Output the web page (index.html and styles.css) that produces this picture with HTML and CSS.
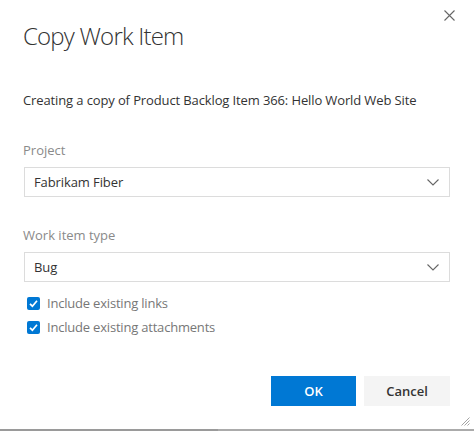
FILE: index.html
```html
<!DOCTYPE html>
<html>
<head>
<meta charset="utf-8">
<link rel="stylesheet" href="styles.css">
</head>
<body>
<div class="dialog">
  <div class="header">
    <h1 class="title">Copy Work Item</h1>
    <button class="close" aria-label="Close">
      <svg width="11" height="11" viewBox="0 0 11 11"><path d="M0.5 0.5 L10.5 10.5 M10.5 0.5 L0.5 10.5" stroke="#666" stroke-width="1.1" fill="none"/></svg>
    </button>
  </div>
  <p class="desc">Creating a copy of Product Backlog Item 366: Hello World Web Site</p>

  <div class="field field-project">
    <div class="label">Project</div>
    <div class="select">
      <span class="value">Fabrikam Fiber</span>
      <svg class="chev" width="12" height="7" viewBox="0 0 12 7"><path d="M0.5 0.5 L6 6 L11.5 0.5" stroke="#666" stroke-width="1.1" fill="none"/></svg>
    </div>
  </div>

  <div class="field field-type">
    <div class="label">Work item type</div>
    <div class="select">
      <span class="value">Bug</span>
      <svg class="chev" width="12" height="7" viewBox="0 0 12 7"><path d="M0.5 0.5 L6 6 L11.5 0.5" stroke="#666" stroke-width="1.1" fill="none"/></svg>
    </div>
  </div>

  <div class="checks">
    <div class="check">
      <svg class="box" width="13" height="13" viewBox="0 0 13 13"><rect x="0" y="0" width="13" height="13" rx="2" fill="#0078d4"/><path d="M3 6.8 L5.4 9.2 L10 3.8" stroke="#fff" stroke-width="1.7" fill="none"/></svg>
      <span>Include existing links</span>
    </div>
    <div class="check">
      <svg class="box" width="13" height="13" viewBox="0 0 13 13"><rect x="0" y="0" width="13" height="13" rx="2" fill="#0078d4"/><path d="M3 6.8 L5.4 9.2 L10 3.8" stroke="#fff" stroke-width="1.7" fill="none"/></svg>
      <span>Include existing attachments</span>
    </div>
  </div>

  <div class="actions">
    <button class="btn btn-ok">OK</button>
    <button class="btn btn-cancel">Cancel</button>
  </div>

  <svg class="grip" width="9" height="9" viewBox="0 0 9 9"><path d="M8.5 0.5 L0.5 8.5 M8.5 3.5 L3.5 8.5 M8.5 6.5 L6.5 8.5" stroke="#999" stroke-width="0.9" fill="none"/></svg>
</div>
<div class="bottombar"></div>
</body>
</html>
```
FILE: styles.css
```css
* { box-sizing: border-box; }
html, body { margin: 0; padding: 0; background: #fff; }
body {
  font-family: "Open Sans", "Noto Sans", sans-serif;
  color: #333;
  width: 474px;
  height: 431px;
  overflow: hidden;
}
.dialog {
  position: relative;
  height: 429px;
  padding: 0 24px 0 24px;
}
.header {
  display: flex;
  justify-content: space-between;
  align-items: flex-start;
}
.title {
  margin: 20px 0 0 -1px;
  font-size: 24px;
  line-height: 32px;
  font-weight: 300;
  color: #333;
  letter-spacing: -0.8px;
}
.close {
  margin: 10px -5px 0 0;
  padding: 0;
  border: 0;
  background: none;
  width: 11px;
  height: 11px;
  display: flex;
}
.desc {
  margin: 39px 0 0 -1px;
  font-size: 13px;
  line-height: 18px;
  color: #333;
  letter-spacing: -0.12px;
}
.field-project { margin-top: 32px; }
.field-type { margin-top: 29px; }
.label {
  font-size: 13px;
  line-height: 18px;
  color: #8a8a8a;
  margin-left: -1px;
}
.select {
  margin-top: 8px;
  height: 30px;
  border: 1px solid #dcdcdc;
  display: flex;
  align-items: center;
  justify-content: space-between;
  padding: 0 10px 0 9px;
}
.value {
  font-size: 13px;
  color: #333;
  letter-spacing: -0.1px;
}
.chev { display: block; }
.checks { margin-top: 9px; }
.check {
  height: 24px;
  display: flex;
  align-items: center;
  padding-left: 3px;
}
.check .box { display: block; flex: none; }
.check span {
  margin-left: 7px;
  font-size: 13px;
  color: #777;
  letter-spacing: -0.2px;
}
.actions {
  margin-top: 37px;
  display: flex;
  justify-content: flex-end;
  gap: 8px;
}
.btn {
  height: 30px;
  border: 0;
  font-family: "Open Sans", "Noto Sans", sans-serif;
  font-size: 13px;
  font-weight: 600;
  padding: 0;
}
.btn-ok {
  width: 85px;
  background: #0078d4;
  color: #fff;
}
.btn-cancel {
  width: 86px;
  background: #f4f4f4;
  color: #333;
}
.grip {
  position: absolute;
  right: 4px;
  bottom: 3px;
}
.bottombar {
  height: 2px;
  background: linear-gradient(to right, #9a9a9a 0, #9a9a9a 218px, #ababab 218px, #ababab 100%);
}
```
